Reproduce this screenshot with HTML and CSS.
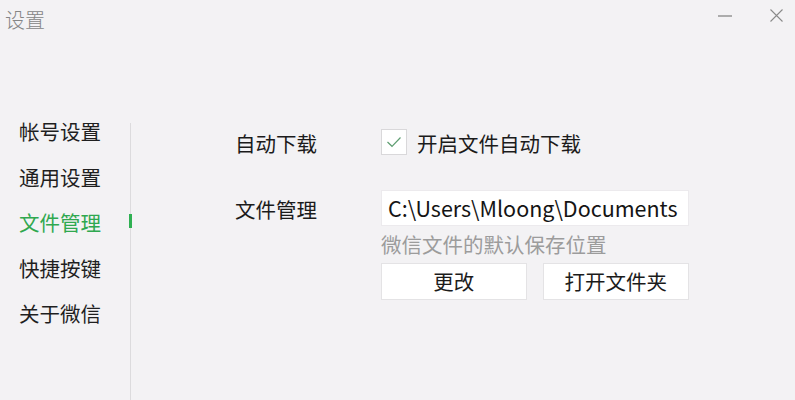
FILE: index.html
```html
<!DOCTYPE html>
<html lang="zh-CN">
<head>
<meta charset="utf-8">
<title>设置</title>
<link rel="stylesheet" href="styles.css">
</head>
<body>
<div class="window">
  <header class="titlebar">
    <div class="title">设置</div>
    <div class="controls">
      <span class="ctl ctl-min"><svg width="14" height="4" viewBox="0 0 14 4"><line x1="0" y1="2" x2="14" y2="2" stroke="#9a9a9a" stroke-width="1.6"/></svg></span>
      <span class="ctl ctl-close"><svg width="13" height="13" viewBox="0 0 13 13"><path d="M0.5 0.5 L12.5 12.5 M12.5 0.5 L0.5 12.5" stroke="#8a8a8a" stroke-width="1.1" fill="none"/></svg></span>
    </div>
  </header>
  <div class="content">
    <nav class="sidebar">
      <ul class="menu">
        <li class="menu-item">帐号设置</li>
        <li class="menu-item">通用设置</li>
        <li class="menu-item active">文件管理</li>
        <li class="menu-item">快捷按键</li>
        <li class="menu-item">关于微信</li>
      </ul>
    </nav>
    <main class="panel">
      <div class="row row-download">
        <div class="label">自动下载</div>
        <div class="field">
          <label class="check">
            <span class="box"><svg width="16" height="12" viewBox="0 0 16 12"><path d="M1.5 6 L6 10.3 L14.5 1.5" stroke="#5f9e72" stroke-width="1.2" fill="none"/></svg></span>
            <span class="check-text">开启文件自动下载</span>
          </label>
        </div>
      </div>
      <div class="row row-files">
        <div class="label label-files">文件管理</div>
        <div class="field">
          <div class="path">C:\Users\Mloong\Documents</div>
          <div class="hint">微信文件的默认保存位置</div>
          <div class="buttons">
            <button class="btn">更改</button>
            <button class="btn">打开文件夹</button>
          </div>
        </div>
      </div>
    </main>
  </div>
</div>
</body>
</html>
```

FILE: styles.css
```css
* { box-sizing: border-box; }
html, body {
  margin: 0;
  padding: 0;
  width: 795px;
  height: 400px;
  overflow: hidden;
  background: #f3f2f4;
  font-family: "Noto Sans CJK SC", "Noto Sans", sans-serif;
  color: #1b1b1b;
}
.window {
  width: 795px;
  height: 400px;
  display: flex;
  flex-direction: column;
}
.titlebar {
  height: 40px;
  display: flex;
  justify-content: space-between;
  align-items: flex-start;
}
.title {
  margin-left: 5px;
  margin-top: 6px;
  font-size: 20px;
  line-height: 28px;
  color: #858585;
  font-weight: 300;
}
.controls {
  display: flex;
  align-items: center;
  height: 31px;
}
.ctl {
  display: flex;
  align-items: center;
  justify-content: center;
}
.ctl-min { width: 14px; margin-right: 38px; margin-left: 2px; }
.ctl-close { width: 13px; margin-right: 12px; }
.content {
  flex: 1;
  display: flex;
}
.sidebar {
  width: 131px;
  margin-top: 83px;
  border-right: 1px solid #dcdbdd;
}
.menu {
  list-style: none;
  margin: -6px 0 0 0;
  padding: 0;
  display: flex;
  flex-direction: column;
  gap: 17.5px;
}
.menu-item {
  position: relative;
  padding-left: 19px;
  font-size: 20.5px;
  line-height: 28px;
  height: 28px;
  color: #1f1f1f;
}
.menu-item.active { color: #2fa84f; }
.menu-item.active::after {
  content: "";
  position: absolute;
  right: -2px;
  top: 6px;
  width: 3px;
  height: 14px;
  background: #2fb052;
}
.panel {
  flex: 1;
  padding-top: 87px;
  padding-left: 104px;
  display: flex;
  flex-direction: column;
  gap: 33px;
}
.row {
  display: grid;
  grid-template-columns: 146px 308px;
}
.label {
  font-size: 20.5px;
  line-height: 28px;
  color: #1b1b1b;
}
.row-download .label { margin-top: 2px; }
.label-files { margin-top: 5px; }
.check {
  display: flex;
  align-items: center;
  gap: 10px;
}
.box {
  width: 26px;
  height: 26px;
  background: #fff;
  border: 1px solid #d9d8da;
  display: flex;
  align-items: center;
  justify-content: center;
}
.check-text {
  font-size: 20.5px;
  line-height: 28px;
  margin-top: 2px;
}
.path {
  height: 36px;
  background: #fff;
  border: 1px solid #eceaed;
  padding-left: 6px;
  font-size: 21.5px;
  line-height: 34px;
  color: #141414;
  white-space: nowrap;
  overflow: hidden;
}
.hint {
  margin-top: 4px;
  font-size: 20.5px;
  line-height: 28px;
  color: #9c9c9c;
}
.buttons {
  margin-top: 5px;
  display: flex;
  gap: 16px;
}
.btn {
  width: 146px;
  height: 37px;
  background: #fff;
  border: 1px solid #e4e3e5;
  border-radius: 0;
  font-family: inherit;
  font-size: 20.5px;
  line-height: 35px;
  padding: 0;
  color: #1b1b1b;
}
.btn:last-child { width: 147px; }
```
